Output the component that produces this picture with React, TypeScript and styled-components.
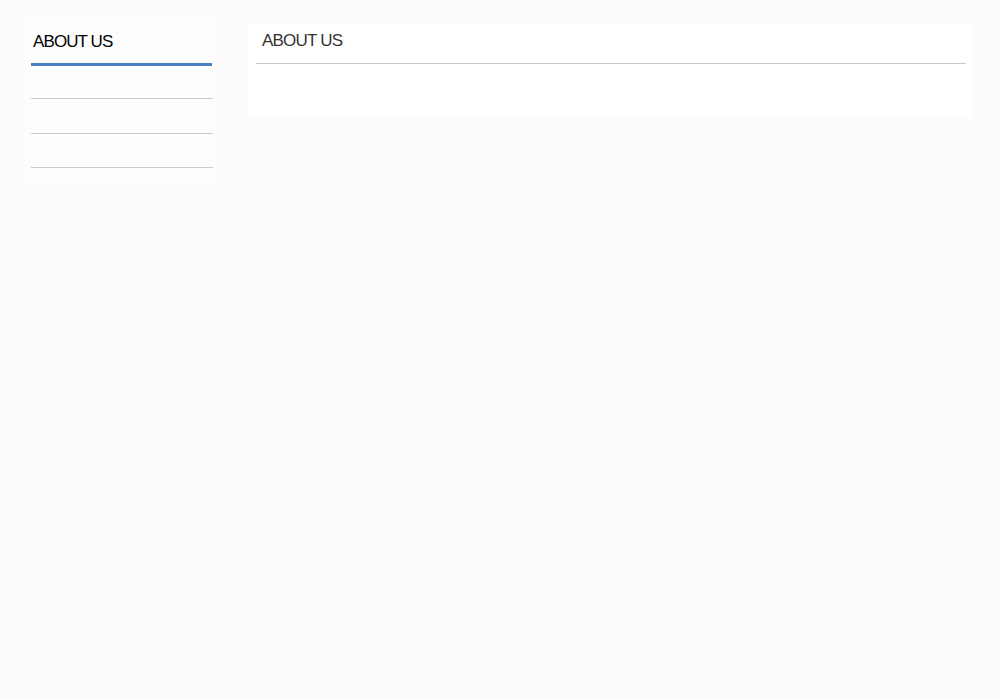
import React from 'react';
import styled, { createGlobalStyle } from 'styled-components';

const GlobalStyle = createGlobalStyle`
  html, body {
    margin: 0;
    padding: 0;
    background: #fcfcfc;
    font-family: "Liberation Sans", Arial, sans-serif;
  }
`;

const Page = styled.div`
  display: flex;
  align-items: flex-start;
  gap: 30px;
  padding: 18px 28px 0 22px;
  min-height: 698px;
  box-sizing: border-box;
`;

const Sidebar = styled.aside`
  width: 196px;
  padding: 15px 5px 12px 9px;
  box-sizing: border-box;
  background: #fdfdfd;
`;

const SideTitle = styled.h2`
  margin: 0;
  padding: 0 0 13px 2px;
  font-size: 17px;
  font-weight: 400;
  letter-spacing: -0.9px;
  color: #000;
  line-height: 17px;
  border-bottom: 3px solid #4a7fc4;
  width: 179px;
`;

const SideList = styled.ul`
  list-style: none;
  margin: 0;
  padding: 0;
`;

const SideItem = styled.li<{ $h: number }>`
  height: ${({ $h }) => $h}px;
  border-bottom: 1px solid #cccccc;
`;

const Main = styled.main`
  flex: 1;
  background: #fff;
  padding: 8px 6px 0 8px;
  height: 94px;
  box-sizing: border-box;
  margin-top: 6px;
`;

const MainHeader = styled.h1`
  margin: 0;
  padding: 0 0 14px 6px;
  font-size: 17px;
  font-weight: 400;
  letter-spacing: -0.8px;
  line-height: 17px;
  color: #333;
  border-bottom: 1px solid #c8c8c8;
`;

export default function App() {
  return (
    <>
      <GlobalStyle />
      <Page>
        <Sidebar>
          <SideTitle>ABOUT US</SideTitle>
          <SideList>
            <SideItem $h={32} />
            <SideItem $h={34} />
            <SideItem $h={33} />
          </SideList>
        </Sidebar>
        <Main>
          <MainHeader>ABOUT US</MainHeader>
        </Main>
      </Page>
    </>
  );
}
